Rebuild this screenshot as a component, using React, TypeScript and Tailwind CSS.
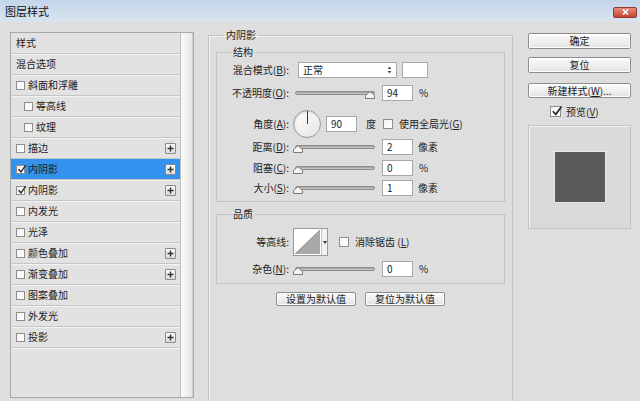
import React from "react";

const FONT = '"Noto Sans CJK SC", "Noto Sans", sans-serif';

function CB({ on, size = 9 }: { on?: boolean; size?: number }) {
  return (
    <div
      className="relative shrink-0 border border-[#8e8e8e] bg-gradient-to-br from-[#f4f4f4] to-[#ffffff]"
      style={{ width: size, height: size }}
    >
      {on && (
        <svg className="absolute left-[0px] top-[-2px]" width={size + 1} height={size + 1} viewBox="0 0 10 10">
          <path d="M1.5 5.2 L4 7.8 L8.8 1.2" fill="none" stroke="#2a2a2a" strokeWidth="1.4" />
        </svg>
      )}
    </div>
  );
}

function Plus() {
  return (
    <div className="w-[11px] h-[11px] border border-[#8a8a8a] bg-gradient-to-b from-[#fbfbfb] to-[#dcdcdc] flex items-center justify-center rounded-[1px]">
      <svg width="7" height="7" viewBox="0 0 7 7">
        <path d="M3.5 0.5 V6.5 M0.5 3.5 H6.5" stroke="#333" strokeWidth="1.4" />
      </svg>
    </div>
  );
}

type Row = { t: string; cb?: "on" | "off"; sub?: boolean; plus?: boolean; sel?: boolean };
const rows: Row[] = [
  { t: "样式" },
  { t: "混合选项" },
  { t: "斜面和浮雕", cb: "off" },
  { t: "等高线", cb: "off", sub: true },
  { t: "纹理", cb: "off", sub: true },
  { t: "描边", cb: "off", plus: true },
  { t: "内阴影", cb: "on", plus: true, sel: true },
  { t: "内阴影", cb: "on", plus: true },
  { t: "内发光", cb: "off" },
  { t: "光泽", cb: "off" },
  { t: "颜色叠加", cb: "off", plus: true },
  { t: "渐变叠加", cb: "off", plus: true },
  { t: "图案叠加", cb: "off" },
  { t: "外发光", cb: "off" },
  { t: "投影", cb: "off", plus: true },
];

function Slider({ pos }: { pos: number }) {
  return (
    <div className="relative w-[80px] h-[10px] flex items-center">
      <div className="w-full h-[4px] rounded-[2px] border border-[#8c8c8c] bg-gradient-to-b from-[#9a9a9a] to-[#d0d0d0]" />
      <svg className="absolute top-[3px]" style={{ left: pos }} width="10" height="8" viewBox="0 0 10 8">
        <path d="M5 0.5 L9.5 4.5 V7.5 H0.5 V4.5 Z" fill="#f4f4f4" stroke="#7a7a7a" strokeWidth="1" />
      </svg>
    </div>
  );
}

function Input({ v }: { v: string }) {
  return (
    <div className="w-[31px] h-[16px] bg-white border border-[#a8a8a8] flex items-center pl-[4px] text-[10px] leading-none text-[#222]">
      {v}
    </div>
  );
}

function Label({ children, w = 72 }: { children: React.ReactNode; w?: number }) {
  return (
    <div className="shrink-0 text-right text-[10px] leading-none text-[#222] whitespace-nowrap" style={{ width: w }}>
      {children}
    </div>
  );
}

const U = ({ c }: { c: string }) => <span className="underline underline-offset-1">{c}</span>;

function Btn({ children, w, h = 16 }: { children: React.ReactNode; w: number; h?: number }) {
  return (
    <div
      className="flex items-center justify-center border border-[#8d8d8d] rounded-[2px] bg-gradient-to-b from-[#fdfdfd] to-[#e2e2e2] text-[10px] leading-none text-[#1a1a1a] shadow-[inset_0_0_0_1px_#ffffff]"
      style={{ width: w, height: h }}
    >
      {children}
    </div>
  );
}

export default function App() {
  return (
    <div className="w-[640px] h-[401px] overflow-hidden bg-[#dedede] flex flex-col" style={{ fontFamily: FONT }}>
      {/* title bar */}
      <div className="h-[22px] shrink-0 bg-gradient-to-b from-[#c3d5ea] to-[#dae4ef] flex items-center justify-between pl-[5px] pr-[3px]">
        <div className="text-[11px] leading-none text-[#111]">图层样式</div>
        <div className="w-[24px] h-[11px] mt-[2px] rounded-[2px] border border-[#8d3b30] bg-gradient-to-b from-[#e48b7d] to-[#c4432f] flex items-center justify-center">
          <svg width="7" height="6" viewBox="0 0 7 6">
            <path d="M1 0.5 L6 5.5 M6 0.5 L1 5.5" stroke="#fff" strokeWidth="1.6" />
          </svg>
        </div>
      </div>

      <div className="flex-1 flex">
        {/* left panel */}
        <div className="ml-[10px] mt-[10px] w-[184px] h-[366px] flex border border-[#a9a9a9] bg-[#e2e2e2]">
          <div className="w-[170px] flex flex-col border-r border-[#bdbdbd]">
            {rows.map((r, i) => (
              <div
                key={i}
                className={`h-[21px] shrink-0 flex items-center border-b border-[#c6c6c6] shadow-[0_1px_0_#f2f2f2] pr-[4px] ${
                  r.sel ? "bg-[#3392ee]" : ""
                } ${r.sub ? "pl-[13px]" : "pl-[5px]"}`}
              >
                {r.cb && <CB on={r.cb === "on"} />}
                <div className={`text-[10px] leading-none text-[#1c1c1c] ${r.cb ? "ml-[3px]" : ""}`}>{r.t}</div>
                <div className="flex-1" />
                {r.plus && <Plus />}
              </div>
            ))}
          </div>
          <div className="w-[12px] bg-gradient-to-r from-[#fbfbfb] to-[#e6e6e6] border-r border-[#cfcfcf]" />
        </div>

        {/* middle */}
        <div className="ml-[14px] mt-[6px] w-[305px] h-[400px]">
          <fieldset className="h-full border border-[#c2c2c2] shadow-[inset_1px_1px_0_#f3f3f3]">
            <legend className="ml-[15px] px-[2px] text-[10px] leading-[14px] text-[#222]">内阴影</legend>
            <div className="px-[7px] pt-[3px]">
              <fieldset className="border border-[#c2c2c2] pb-[5px]">
                <legend className="ml-[14px] px-[2px] text-[10px] leading-[14px] text-[#222]">结构</legend>
                {/* blend mode */}
                <div className="mt-[3px] h-[16px] flex items-center">
                  <Label>
                    混合模式(<U c="B" />):
                  </Label>
                  <div className="ml-[9px] w-[99px] h-[16px] bg-white border border-[#a8a8a8] flex items-center justify-between pl-[4px] pr-[4px] text-[10px] leading-none text-[#222]">
                    <span>正常</span>
                    <svg width="5" height="8" viewBox="0 0 5 8">
                      <path d="M2.5 0.5 L4.5 3 H0.5 Z M2.5 7.5 L4.5 5 H0.5 Z" fill="#555" />
                    </svg>
                  </div>
                  <div className="ml-[5px] w-[26px] h-[16px] bg-white border border-[#a8a8a8]" />
                </div>
                {/* opacity */}
                <div className="mt-[7px] h-[16px] flex items-center">
                  <Label>
                    不透明度(<U c="O" />):
                  </Label>
                  <div className="ml-[6px]">
                    <Slider pos={70} />
                  </div>
                  <div className="ml-[7px]">
                    <Input v="94" />
                  </div>
                  <div className="ml-[6px] text-[10px] leading-none text-[#222]">%</div>
                </div>
                {/* angle */}
                <div className="mt-[9px] h-[28px] flex items-center">
                  <Label>
                    角度(<U c="A" />):
                  </Label>
                  <div className="ml-[4px] w-[28px] h-[28px] rounded-full border border-[#9a9a9a] bg-gradient-to-br from-[#ffffff] to-[#e4e4e4] shadow-[inset_1px_1px_2px_#cfcfcf] flex justify-center">
                    <div className="w-[1px] h-[13px] bg-[#3a3a3a] mt-[0px]" />
                  </div>
                  <div className="ml-[5px]">
                    <Input v="90" />
                  </div>
                  <div className="ml-[9px] text-[10px] leading-none text-[#222]">度</div>
                  <div className="ml-[7px]">
                    <CB size={10} />
                  </div>
                  <div className="ml-[6px] text-[10px] leading-none text-[#222] whitespace-nowrap">
                    使用全局光(<U c="G" />)
                  </div>
                </div>
                {/* distance */}
                <div className="mt-[1px] h-[16px] flex items-center">
                  <Label>
                    距离(<U c="D" />):
                  </Label>
                  <div className="ml-[6px]">
                    <Slider pos={-2} />
                  </div>
                  <div className="ml-[7px]">
                    <Input v="2" />
                  </div>
                  <div className="ml-[5px] text-[10px] leading-none text-[#222]">像素</div>
                </div>
                <div className="mt-[5px] h-[16px] flex items-center">
                  <Label>
                    阻塞(<U c="C" />):
                  </Label>
                  <div className="ml-[6px]">
                    <Slider pos={-2} />
                  </div>
                  <div className="ml-[7px]">
                    <Input v="0" />
                  </div>
                  <div className="ml-[6px] text-[10px] leading-none text-[#222]">%</div>
                </div>
                <div className="mt-[4px] h-[16px] flex items-center">
                  <Label>
                    大小(<U c="S" />):
                  </Label>
                  <div className="ml-[6px]">
                    <Slider pos={-2} />
                  </div>
                  <div className="ml-[7px]">
                    <Input v="1" />
                  </div>
                  <div className="ml-[5px] text-[10px] leading-none text-[#222]">像素</div>
                </div>
              </fieldset>

              <fieldset className="mt-[5px] border border-[#c2c2c2] pb-[6px]">
                <legend className="ml-[14px] px-[2px] text-[10px] leading-[14px] text-[#222]">品质</legend>
                <div className="mt-[7px] h-[28px] flex items-center">
                  <Label>等高线:</Label>
                  <div className="ml-[4px] flex h-[28px] border border-[#9a9a9a] bg-white">
                    <svg width="27" height="26" viewBox="0 0 27 26">
                      <path d="M1 25 L26 1 V25 Z" fill="#a9a9a9" />
                      <path d="M1 25 L26 1" stroke="#7a7a7a" strokeWidth="0.8" />
                    </svg>
                    <div className="w-[6px] border-l border-[#c4c4c4] bg-[#f2f2f2] flex items-center justify-center">
                      <svg width="4" height="3" viewBox="0 0 4 3">
                        <path d="M0 0 H4 L2 3 Z" fill="#333" />
                      </svg>
                    </div>
                  </div>
                  <div className="ml-[11px]">
                    <CB size={10} />
                  </div>
                  <div className="ml-[6px] text-[10px] leading-none text-[#222] whitespace-nowrap">
                    消除锯齿 (<U c="L" />)
                  </div>
                </div>
                <div className="mt-[5px] h-[16px] flex items-center">
                  <Label>
                    杂色(<U c="N" />):
                  </Label>
                  <div className="ml-[6px]">
                    <Slider pos={-2} />
                  </div>
                  <div className="ml-[7px]">
                    <Input v="0" />
                  </div>
                  <div className="ml-[6px] text-[10px] leading-none text-[#222]">%</div>
                </div>
              </fieldset>

              <div className="mt-[8px] flex justify-center gap-[9px]">
                <Btn w={80} h={14}>设置为默认值</Btn>
                <Btn w={80} h={14}>复位为默认值</Btn>
              </div>
            </div>
          </fieldset>
        </div>

        {/* right */}
        <div className="ml-[15px] mt-[11px] w-[103px] flex flex-col">
          <Btn w={103}>确定</Btn>
          <div className="mt-[8px]">
            <Btn w={103}>复位</Btn>
          </div>
          <div className="mt-[10px]">
            <Btn w={103} h={15}>
              新建样式(<U c="W" />)...
            </Btn>
          </div>
          <div className="mt-[8px] h-[11px] pl-[22px] flex items-center">
            <CB size={11} on />
            <div className="ml-[5px] text-[10px] leading-none text-[#222]">
              预览(<U c="V" />)
            </div>
          </div>
          <div className="mt-[8px] w-[103px] h-[104px] border border-[#c4c4c4] shadow-[inset_1px_1px_0_#f0f0f0] bg-[#dadada] flex items-center justify-center">
            <div className="w-[50px] h-[50px] bg-[#595959] shadow-[0_0_0_1px_#e8e8e8]" />
          </div>
        </div>
      </div>
    </div>
  );
}
